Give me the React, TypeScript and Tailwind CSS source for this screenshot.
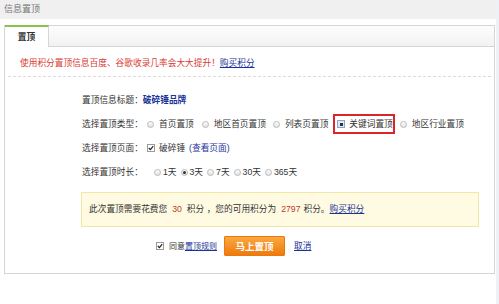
import React from 'react';

const Radio = ({ checked = false }: { checked?: boolean }) => (
  <span className="inline-flex items-center justify-center w-[7px] h-[7px] rounded-full border border-[#b9b9b9] bg-[linear-gradient(#fdfdfd,#e2e2e2)] shrink-0">
    {checked && <span className="w-[3px] h-[3px] rounded-full bg-[#333]" />}
  </span>
);

const Check = () => (
  <span className="inline-flex items-center justify-center w-[8px] h-[8px] border border-[#9a9a9a] bg-white shrink-0">
    <svg width="6" height="6" viewBox="0 0 6 6">
      <path d="M0.8 3 L2.4 4.6 L5.2 1.2" stroke="#222" strokeWidth="1.2" fill="none" />
    </svg>
  </span>
);

const Option = ({ label, checked = false, className = '' }: { label: string; checked?: boolean; className?: string }) => (
  <span className={`inline-flex items-center ${className}`}>
    <Radio checked={checked} />
    <span>{label}</span>
  </span>
);

export default function App() {
  return (
    <div
      className="relative w-[499px] h-[304px] bg-white text-[8.7px] leading-[11px] text-[#333] overflow-hidden"
      style={{ fontFamily: '"Liberation Sans", "Noto Sans CJK SC", sans-serif' }}
    >
      <div className="h-[19px] bg-[#f0f0f0] flex items-center pl-[4px] text-[#777] text-[9px]">信息置顶</div>

      <div className="mt-[6px] ml-[4px] w-[491px] h-[249px] border border-[#d6d6d6] flex flex-col">
        {/* tab header */}
        <div className="h-[21px] flex bg-[linear-gradient(#fdfdfd,#f2f2f2)] border-b border-[#d6d6d6]">
          <div className="w-[44px] -mb-px -mt-px h-[22px] bg-white border-t-2 border-t-[#8bc34a] border-r border-[#d6d6d6] flex items-center justify-center font-bold text-[#333]">
            置顶
          </div>
        </div>

        {/* notice */}
        <div className="pt-[11px] pl-[15px] h-[29px] text-[#d93a2f]">
          使用积分置顶信息百度、谷歌收录几率会大大提升！<span className="text-[#1a3399] underline">购买积分</span>
        </div>
        <div className="mx-[3px] border-t border-dashed border-[#dcdcdc]" />

        {/* form */}
        <div className="pl-[77px] pt-[11px]">
          <div className="h-[24px] flex items-center">
            <span>置顶信息标题：</span>
            <span className="font-bold text-[#1a3399]">破碎锤品牌</span>
          </div>

          <div className="h-[24px] flex items-center">
            <span className="w-[62px]">选择置顶类型：</span>
            <Option label="首页置顶" className="ml-[3px] gap-[5px]" />
            <Option label="地区首页置顶" className="ml-[8px] gap-[5px]" />
            <Option label="列表页置顶" className="ml-[7px] gap-[5px]" />
            <span className="ml-[5px] h-[20px] pl-[2px] pr-0 border-2 border-[#d9262b] inline-flex items-center gap-[4px]">
              <span className="inline-flex items-center justify-center w-[8px] h-[8px] border border-[#8ea3c8] bg-[#dfe8f6]">
                <span className="w-[3px] h-[3px] bg-[#333]" />
              </span>
              <span>关键词置顶</span>
            </span>
            <Option label="地区行业置顶" className="ml-[5px] gap-[5px]" />
          </div>

          <div className="h-[24px] flex items-center">
            <span className="w-[62px]">选择置顶页面：</span>
            <span className="ml-[3px] inline-flex items-center">
              <Check />
              <span className="ml-[4px]">破碎锤</span>
              <span className="ml-[4px] text-[#1a3399]">(查看页面)</span>
            </span>
          </div>

          <div className="h-[24px] flex items-center">
            <span className="w-[62px]">选择置顶时长：</span>
            <Option label="1天" className="ml-[10px] gap-[2px]" />
            <Option label="3天" checked className="ml-[4px] gap-[2px]" />
            <Option label="7天" className="ml-[4px] gap-[2px]" />
            <Option label="30天" className="ml-[4px] gap-[2px]" />
            <Option label="365天" className="ml-[4px] gap-[2px]" />
          </div>
        </div>

        <div className="ml-[76px] mt-[8px] w-[398px] h-[35px] bg-[#fffbe3] border border-[#f3e7a6] flex items-center pl-[7px]">
          此次置顶需要花费您
          <span className="mx-[5px] text-[#c0392b]">30</span>
          积分 ，您的可用积分为
          <span className="ml-[5px] mr-[3px] text-[#c0392b]">2797</span>
          积分。<span className="text-[#1a3399] underline">购买积分</span>
        </div>

        <div className="mt-[9px] h-[20px] flex items-center pl-[151px] text-[8px]">
          <Check />
          <span className="ml-[5px]">同意</span>
          <span className="text-[#1a3399] underline">置顶规则</span>
          <span className="ml-[7px] w-[61px] h-[20px] bg-[linear-gradient(#f9a93f,#ef7a0c)] border border-[#e9780f] rounded-[1px] text-white font-bold text-[9.5px] flex items-center justify-center">
            马上置顶
          </span>
          <span className="ml-[9px] text-[#1a3399] underline text-[8.7px]">取消</span>
        </div>
      </div>

      <div className="absolute right-0 top-0 w-[3px] h-[304px] bg-[#eef2f7]" />
    </div>
  );
}
